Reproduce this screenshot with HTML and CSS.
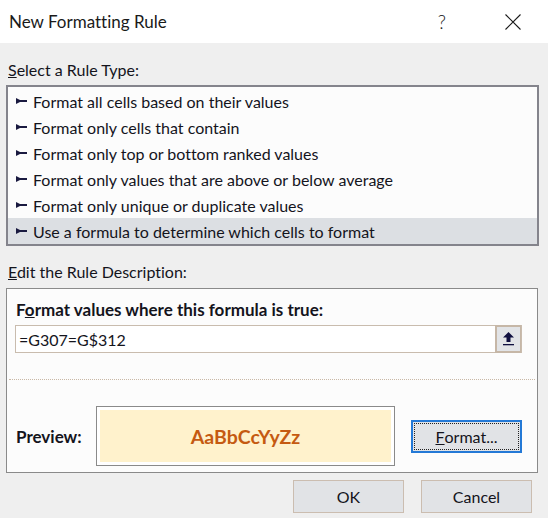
FILE: index.html
```html
<!DOCTYPE html>
<html>
<head>
<meta charset="utf-8">
<link rel="stylesheet" href="styles.css">
</head>
<body>
<div class="dialog">
  <div class="titlebar">
    <span class="title">New Formatting Rule</span>
    <span class="help">?</span>
    <svg class="close" width="16" height="16" viewBox="0 0 16 16"><path d="M0.5 0.5 L15.5 15.5 M15.5 0.5 L0.5 15.5" stroke="#1a1a1a" stroke-width="1.1" fill="none"/></svg>
  </div>
  <div class="content">
    <div class="label"><u>S</u>elect a Rule Type:</div>
    <div class="list">
      <div class="row"><svg class="bullet" width="11" height="6" viewBox="0 0 11 6"><polygon points="0,0 4,2 11,2 11,4 4,4 0,6" fill="#1a1a40"/></svg>Format all cells based on their values</div>
      <div class="row"><svg class="bullet" width="11" height="6" viewBox="0 0 11 6"><polygon points="0,0 4,2 11,2 11,4 4,4 0,6" fill="#1a1a40"/></svg>Format only cells that contain</div>
      <div class="row"><svg class="bullet" width="11" height="6" viewBox="0 0 11 6"><polygon points="0,0 4,2 11,2 11,4 4,4 0,6" fill="#1a1a40"/></svg>Format only top or bottom ranked values</div>
      <div class="row"><svg class="bullet" width="11" height="6" viewBox="0 0 11 6"><polygon points="0,0 4,2 11,2 11,4 4,4 0,6" fill="#1a1a40"/></svg>Format only values that are above or below average</div>
      <div class="row"><svg class="bullet" width="11" height="6" viewBox="0 0 11 6"><polygon points="0,0 4,2 11,2 11,4 4,4 0,6" fill="#1a1a40"/></svg>Format only unique or duplicate values</div>
      <div class="row selected"><svg class="bullet" width="11" height="6" viewBox="0 0 11 6"><polygon points="0,0 4,2 11,2 11,4 4,4 0,6" fill="#1a1a40"/></svg>Use a formula to determine which cells to format</div>
    </div>
    <div class="label label2"><u>E</u>dit the Rule Description:</div>
    <div class="desc">
      <div class="desc-title">F<u>o</u>rmat values where this formula is true:</div>
      <div class="input">
        <span class="formula">=G307=G$312</span>
        <span class="refbtn"><svg width="11" height="14" viewBox="0 0 11 14"><polygon points="5.5,0 11,5.5 7.5,5.5 7.5,10 3.5,10 3.5,5.5 0,5.5" fill="#101040"/><rect x="0" y="12" width="11" height="1.3" fill="#101040"/></svg></span>
      </div>
      <div class="sep"></div>
      <div class="preview-row">
        <span class="preview-label">Preview:</span>
        <div class="preview-box"><div class="preview-fill">AaBbCcYyZz</div></div>
        <div class="btn format-btn"><span class="focus"><u>F</u>ormat...</span></div>
      </div>
    </div>
    <div class="footer">
      <div class="btn">OK</div>
      <div class="btn">Cancel</div>
    </div>
  </div>
</div>
</body>
</html>
```
FILE: styles.css
```css
html, body {
  margin: 0;
  padding: 0;
}
body {
  width: 548px;
  height: 518px;
  overflow: hidden;
  font-family: Lato, "Noto Sans", sans-serif;
  font-size: 16px;
  font-variant-ligatures: none;
  color: #14141c;
}
.dialog {
  width: 548px;
  height: 518px;
  display: flex;
  flex-direction: column;
  background: #efefef;
}
.titlebar {
  height: 43px;
  background: #ffffff;
  display: flex;
  align-items: center;
  padding-left: 9px;
  flex-shrink: 0;
}
.title {
  font-size: 17px;
  color: #1a1a1a;
  flex: 1;
}
.help {
  font-size: 19px;
  font-weight: 300;
  color: #1a1a1a;
  margin-right: 59px;
}
.close {
  margin-right: 27px;
}
.content {
  display: flex;
  flex-direction: column;
  padding: 0 9px 0 6px;
}
.label {
  line-height: 20px;
  height: 20px;
  margin-top: 17px;
  padding-left: 2px;
}
.label2 {
  margin-top: 16px;
}
.list {
  margin-top: 5px;
  width: 529px;
  border: 2px solid #84848c;
  background: #fcfcfc;
  padding-top: 1px;
}
.row {
  height: 26px;
  display: flex;
  align-items: center;
  white-space: nowrap;
}
.row.selected {
  background: #dcdfe3;
}
.bullet {
  margin-left: 8px;
  margin-right: 6px;
}
.desc {
  margin-top: 6px;
  width: 530px;
  height: 183px;
  border: 1px solid #8a8a8a;
  background: #fcfcfc;
  display: flex;
  flex-direction: column;
}
.desc-title {
  font-weight: 700;
  font-size: 17px;
  line-height: 20px;
  margin-top: 11px;
  padding-left: 9px;
}
.input {
  margin: 5px 0 0 8px;
  width: 505px;
  height: 26px;
  border: 1px solid #c9bcae;
  background: #ffffff;
  display: flex;
  align-items: center;
}
.formula {
  flex: 1;
  padding-left: 3px;
}
.refbtn {
  width: 23px;
  height: 24px;
  border: 2px solid #c6b7a7;
  border-right-width: 1px;
  background: #e2e4e7;
  display: flex;
  align-items: center;
  justify-content: center;
  margin-top: -1px;
  margin-bottom: -1px;
}
.sep {
  margin: 26px 2px 0 2px;
  border-top: 1px dotted #c9b8a6;
}
.preview-row {
  margin-top: 26px;
  display: flex;
  align-items: center;
  padding-left: 9px;
}
.preview-label {
  font-weight: 700;
  font-size: 17px;
  width: 80px;
}
.preview-box {
  border: 1px solid #8a8a8a;
  background: #ffffff;
  padding: 3px;
  box-sizing: border-box;
  width: 299px;
  height: 60px;
}
.preview-fill {
  width: 100%;
  height: 100%;
  background: #fff2cc;
  display: flex;
  align-items: center;
  justify-content: center;
  color: #c55a11;
  font-weight: 700;
  font-size: 19.5px;
}
.btn {
  width: 111px;
  height: 33px;
  box-sizing: border-box;
  border: 1px solid #cbbdb0;
  background: #e1e3e6;
  display: flex;
  align-items: center;
  justify-content: center;
}
.format-btn {
  margin-left: 16px;
  border: 2px solid #2479d6;
  padding: 1px;
}
.format-btn .focus {
  width: 100%;
  height: 100%;
  box-sizing: border-box;
  border: 1px dotted #222;
  display: flex;
  align-items: center;
  justify-content: center;
}
.footer {
  display: flex;
  justify-content: flex-end;
  gap: 17px;
  margin-top: 7px;
  padding-right: 7px;
}
```
